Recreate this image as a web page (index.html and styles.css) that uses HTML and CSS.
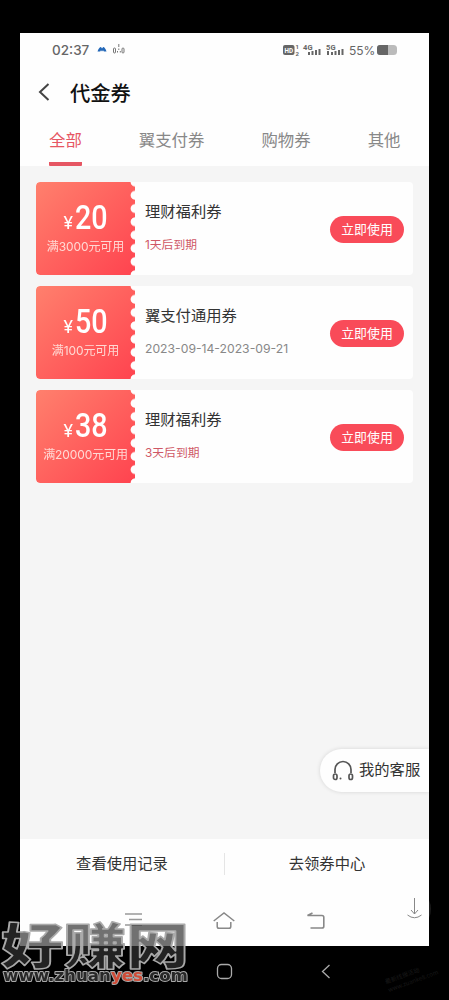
FILE: index.html
```html
<!DOCTYPE html>
<html lang="zh-CN">
<head>
<meta charset="utf-8">
<title>代金券</title>
<link rel="stylesheet" href="styles.css">
</head>
<body>
<div class="screen">
  <div class="status">
    <span class="clock">02:37</span>
    <svg class="status-left" width="32" height="14" viewBox="0 0 32 14"><path d="M1.500 8.500 Q3 4 5 4 L6 5.500 L7.200 4 Q9 4 10.500 8.500 L7.900 8.500 L7 7.200 L6 8.500 L5 7.200 L4.200 8.500Z" fill="#2468b8"/><g fill="none" stroke="#777" stroke-width="1"><rect x="17.500" y="5" width="2" height="5" rx="1"/><rect x="26" y="5" width="2" height="5" rx="1"/><path d="M22.800 1v3M22.800 5.500v1.500M21.500 9.500v-1.500M24.300 8v1.500"/></g></svg>
    <svg class="status-right" width="66" height="16" viewBox="0 0 66 16"><rect x="0" y="3" width="11.500" height="10" rx="2" fill="#666"/><g font-family="Roboto, sans-serif" font-weight="700" fill="#666"><text x="1.500" y="10.800" font-size="7.500" textLength="8.500" lengthAdjust="spacingAndGlyphs" fill="#fff">HD</text><text x="12.500" y="7" font-size="6">1</text><text x="12.500" y="13.500" font-size="6">2</text><text x="20" y="7.500" font-size="7.500" textLength="9.500">4G</text><text x="43" y="7.500" font-size="7.500" textLength="9.500">5G</text></g><path d="M26 13v-3M29.500 13v-4M33 13v-5M36.500 13v-6M45 9v4M49 13v-3M52.500 13v-4M56 13v-5M59.500 13v-6" stroke="#666" stroke-width="2"/></svg>
    <span class="percent">55%</span>
    <svg class="battery" width="20" height="10" viewBox="0 0 20 10"><rect width="20" height="10" rx="3.500" fill="#bbb"/><path d="M11 0H3Q0 0 0 3v4q0 3 3 3h8z" fill="#666"/></svg>
  </div>
  <header class="title">
    <svg width="12" height="20" viewBox="0 0 12 20"><path d="M10.500 2L2 10l8.500 8" fill="none" stroke="#444" stroke-width="2"/></svg>
    <h1>代金券</h1>
  </header>
  <nav class="tabs"><span class="active">全部</span><span>翼支付券</span><span>购物券</span><span>其他</span></nav>
  <main class="coupons">
    <article class="coupon"><div class="ticket"><div class="price"><i>¥</i><b>20</b></div><small>满3000元可用</small></div><div class="info"><h2>理财福利券</h2><p class="soon">1天后到期</p></div><button>立即使用</button></article>
    <article class="coupon"><div class="ticket"><div class="price"><i>¥</i><b>50</b></div><small>满100元可用</small></div><div class="info"><h2>翼支付通用券</h2><p>2023-09-14-2023-09-21</p></div><button>立即使用</button></article>
    <article class="coupon"><div class="ticket"><div class="price"><i>¥</i><b>38</b></div><small>满20000元可用</small></div><div class="info"><h2>理财福利券</h2><p class="soon">3天后到期</p></div><button>立即使用</button></article>
  </main>
  <div class="service"><svg width="22" height="22" viewBox="0 0 22 22"><g fill="none" stroke="#555" stroke-width="1.700"><path d="M3 13V9.500a8 8 0 0 1 16 0V13"/><rect x="1.500" y="14" width="3.500" height="5.500" rx="1.700"/><rect x="17" y="14" width="3.500" height="5.500" rx="1.700"/></g><circle cx="8.500" cy="18.500" r="1" fill="#555"/></svg><span>我的客服</span></div>
  <footer class="actions"><span>查看使用记录</span><i></i><span>去领券中心</span></footer>
  <div class="phone-nav">
    <svg width="18" height="18" viewBox="0 0 18 18"><path d="M1 2h17M5 7.500h13M1 13h17" stroke="#999" stroke-width="1.500"/></svg>
    <svg width="22" height="18" viewBox="0 0 22 18"><path d="M.700 9L11 1l10.300 8M4.200 10v4.500q0 1.800 1.800 1.800h10q1.800 0 1.800-1.800V10" fill="none" stroke="#888" stroke-width="1.500"/></svg>
    <svg width="20" height="18" viewBox="0 0 20 18"><path d="M6.500 1L1.500 3.500H16q1.800 0 1.800 1.800v8.900q0 1.800-1.800 1.800H4.500" fill="none" stroke="#888" stroke-width="1.600"/></svg>
  </div>
</div>
<svg class="outer-nav" width="130" height="24" viewBox="0 0 130 24"><g fill="none" stroke="#aaa" stroke-width="1.300"><rect x="7.500" y="4.500" width="14" height="14" rx="4"/><path d="M119.500 5l-7 6.500 7 6.500"/></g></svg>
<svg class="download" width="34" height="34" viewBox="0 0 34 34"><path d="M31 8q4 9 0 18z" fill="#1c1c1c"/><path d="M16.500 6v16M13 18l3.500 4 3.500-4M9.500 23q7 5.500 14 0" fill="none" stroke="#888"/></svg>
<svg class="watermark" width="196" height="84" viewBox="0 0 196 84">
  <text class="mark-name" x="1" y="59" textLength="188" lengthAdjust="spacingAndGlyphs">好赚网</text>
  <text class="mark-url" x="3" y="76" textLength="185" lengthAdjust="spacingAndGlyphs">www.zhuan<tspan class="yes">yes</tspan>.com</text>
</svg>
<svg class="corner-mark" width="62" height="40" viewBox="0 0 62 40"><text x="2" y="28" transform="rotate(-20 2 28)">最新线报活动</text><text x="5" y="36" transform="rotate(-20 5 36)">www.zuanke8.com</text></svg>
</body>
</html>
```
FILE: styles.css
```css
* { box-sizing: border-box; }
body { position: relative; margin: 0; width: 449px; height: 1000px; overflow: hidden; background: #000; font-family: "Noto Sans CJK SC", sans-serif; color: #333; }
h1, h2, p { margin: 0; font-weight: 400; }
.screen { display: flex; flex-direction: column; position: relative; width: 409px; height: 913px; margin: 33px 0 0 20px; background: #fefefe; overflow: hidden; }
.status { display: flex; align-items: center; height: 34px; padding: 0 32px 0 32px; font-family: Inter, sans-serif; color: #666; }
.clock { width: 43px; font-size: 13.500px; font-weight: 500; }
.status-left { margin-left: 1px; }
.status-right { margin-left: auto; }
.percent { width: 28px; font-size: 12px; }
.battery { flex: none; }
.title { display: flex; align-items: center; height: 50px; padding: 0 0 1px 18px; gap: 20px; }
.title h1 { font-size: 20.300px; font-weight: 500; line-height: 30px; color: #111; }
.tabs { display: flex; justify-content: space-between; height: 49px; padding: 0 28.500px 0 29px; font-size: 16.400px; line-height: 45px; color: #888; }
.tabs span { height: 49px; }
.tabs .active { color: #e65663; border-bottom: 4px solid #e65663; border-radius: 1px; }
.coupons { display: flex; flex-direction: column; gap: 11px; height: 673px; padding: 16px 16px; background: #f5f5f5; }
.coupon { display: flex; align-items: center; height: 93px; padding-right: 9px; border-radius: 4px; background: #fefefe; }
.ticket { display: flex; flex-direction: column; align-items: center; width: 99px; height: 93px; padding-top: 17px; border-radius: 4px 0 0 4px; background: linear-gradient(135deg, #ff806d, #ff434f); color: #fff; -webkit-mask: linear-gradient(#000 0 0) left / 94px 100% no-repeat, radial-gradient(circle at 5px 6.640px, transparent 4px, #000 4.800px) 94px -6.640px / 5px 13.280px repeat-y; }
.price { display: flex; align-items: baseline; gap: 2px; height: 38px; font-family: Roboto, sans-serif; line-height: 38px; }
.price i { font-size: 18px; font-style: normal; }
.price b { font-size: 33px; font-weight: 500; transform: scaleX(.87); transform-origin: left; margin-right: -5px; }
.ticket small { font: 12px/20px Inter, "Noto Sans CJK SC", sans-serif; letter-spacing: -.1px; white-space: nowrap; color: #ffd9d4; }
.info { flex: 1; padding: 0 0 4px 10px; }
.info h2 { font-size: 15.300px; line-height: 24px; }
.info p { margin-top: 13px; font: 12.200px/20px Inter, "Noto Sans CJK SC", sans-serif; color: #888; white-space: nowrap; }
.info .soon { color: #cf5866; font-size: 11.800px; }
.coupon button { width: 74px; height: 27px; margin-top: 1px; padding: 0 0 2px; border: 0; border-radius: 14px; background: #f94b59; color: #fff; font: 12.900px/25px "Noto Sans CJK SC", sans-serif; }
.service { display: flex; position: absolute; right: 0; top: 716px; align-items: center; width: 109px; height: 43px; padding-left: 12px; gap: 5px; border-radius: 22px 0 0 22px; background: #fefefe; box-shadow: 0 0 4px #0002; font-size: 15.300px; white-space: nowrap; }
.service span { padding-bottom: 5px; }
.actions { display: flex; align-items: center; height: 50px; font-size: 15.300px; }
.actions span { flex: 1; padding-bottom: 4px; text-align: center; }
.actions i { width: 1px; height: 22px; background: #e5e5e5; }
.phone-nav { display: flex; align-items: center; justify-content: space-between; height: 57px; padding: 6px 103px 0 104px; }
.outer-nav { position: absolute; left: 210px; top: 960px; }
.download { position: absolute; left: 398px; top: 892px; }
.watermark { position: absolute; left: 0; top: 905px; opacity: .99; }
.watermark text { stroke: #aaa; stroke-width: 1.500px; stroke-linejoin: round; }
.mark-name { font: 900 49px "Noto Sans CJK SC", sans-serif; fill: #333; fill-opacity: .7; }
.watermark .mark-url { font: 700 16px "DejaVu Sans", sans-serif; fill: #292929; paint-order: stroke; stroke-width: 2px; }
.watermark .yes { fill: #d34c37; }
.corner-mark { position: absolute; left: 384px; top: 956px; font: 6px "Noto Sans CJK SC", sans-serif; fill: #181818; }
```
